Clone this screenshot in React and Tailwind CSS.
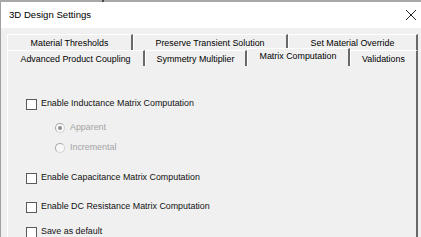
const rowOne = [
  { label: "Material Thresholds", w: 126 },
  { label: "Preserve Transient Solution", w: 155 },
  { label: "Set Material Override", w: 130 },
]

const rowTwo = [
  { label: "Advanced Product Coupling", w: 138 },
  { label: "Symmetry Multiplier", w: 102 },
  { label: "Matrix Computation", w: 103, active: true },
  { label: "Validations", w: 68 },
]

const Tab = ({ label, w, active }) => {
  if (active) {
    return (
      <div
        style={{ width: w }}
        className="relative z-10 -mt-[2px] h-[18px] bg-[#f0f0f0] border-l border-t border-white border-r-2 border-r-[#696969] flex justify-center pt-[2px]"
      >
        <span className="leading-[11px]">{label}</span>
      </div>
    )
  }
  return (
    <div
      style={{ width: w }}
      className="h-[16px] bg-[#f0f0f0] border-l border-t border-white border-r-2 border-r-[#696969] flex items-center justify-center"
    >
      <span className="leading-[11px] pt-[1px]">{label}</span>
    </div>
  )
}

const Check = ({ label, className }) => (
  <div className={`flex items-center h-[14px] pl-[18px] ${className}`}>
    <div className="w-[11px] h-[11px] border border-[#5a5a5a] bg-white" />
    <span className="ml-[4px] text-[#111]">{label}</span>
  </div>
)

const Radio = ({ label, checked, className }) => (
  <div className={`flex items-center h-[14px] pl-[47px] ${className}`}>
    <div className="w-[10px] h-[10px] rounded-full border border-[#a9a9a9] border-r-[#d4d4d4] border-b-[#d4d4d4] bg-[#f7f7f7] flex items-center justify-center">
      {checked && <div className="w-[4px] h-[4px] rounded-full bg-[#8f8f8f]" />}
    </div>
    <span className="ml-[5px] text-[#a3a3a3]">{label}</span>
  </div>
)

export default function App() {
  return (
    <div className="w-[421px] h-[237px] overflow-hidden bg-[#f0f0f0] text-[8.9px] text-black" style={{ fontFamily: '"Liberation Sans", Arial, sans-serif' }}>
      <div className="h-[2px] bg-[#a8a8a8] flex">
        <div className="ml-[102px] w-[2px] h-[2px] bg-[#4a4a4a]" />
      </div>
      <div className="h-[26px] bg-white border-l border-[#a0a0a0] flex items-center justify-between pl-[8px] pr-[4px]">
        <span className="text-[9.6px] pt-[1px]">3D Design Settings</span>
        <svg width="12" height="12" viewBox="0 0 12 12">
          <path d="M1 1 L11 11 M11 1 L1 11" stroke="#222" strokeWidth="1" fill="none" />
        </svg>
      </div>
      <div className="h-[209px] border-l border-[#a0a0a0] pl-[6px] pr-[2px] pt-[6px]">
        <div className="flex">
          {rowOne.map((t) => (
            <Tab key={t.label} {...t} />
          ))}
        </div>
        <div className="flex">
          {rowTwo.map((t) => (
            <Tab key={t.label} {...t} />
          ))}
        </div>
        <div className="w-[411px] h-[200px] border-l border-white border-r-2 border-r-[#696969] flex flex-col">
          <Check label="Enable Inductance Matrix Computation" className="mt-[31px]" />
          <Radio label="Apparent" checked className="mt-[10px]" />
          <Radio label="Incremental" className="mt-[6px]" />
          <Check label="Enable Capacitance Matrix Computation" className="mt-[16px]" />
          <Check label="Enable DC Resistance Matrix Computation" className="mt-[15px]" />
          <Check label="Save as default" className="mt-[11px]" />
        </div>
      </div>
    </div>
  )
}
